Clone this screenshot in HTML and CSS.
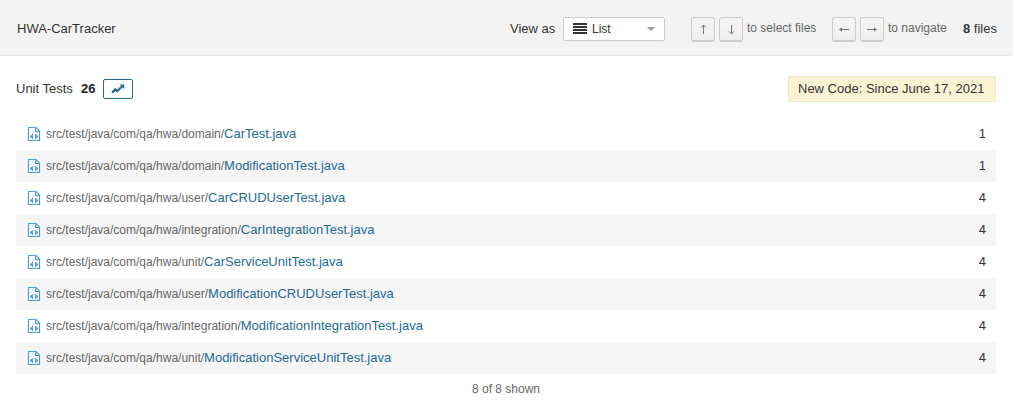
FILE: index.html
```html
<!DOCTYPE html>
<html lang="en">
<head>
<meta charset="utf-8">
<title>HWA-CarTracker</title>
<link rel="stylesheet" href="styles.css">
</head>
<body>
<svg class="defs" aria-hidden="true">
  <symbol id="file" viewBox="0 0 16 16">
    <path fill="none" stroke="currentColor" stroke-width="1.2" d="M2.500 1.500h7.600l3.400 3.400v9.600h-11zM9.500 1.500v4h4"/>
    <path fill="currentColor" d="M7 8v5H6v-1H5.200L3.800 10.500 5.200 9H6V8zM9 8h1v1h.8l1.400 1.500-1.400 1.500H10v1H9z"/>
  </symbol>
  <symbol id="arrow-up" viewBox="0 0 12 12">
    <path fill="none" stroke="currentColor" d="M6.500 2v9M4 4.500 6.500 2 9 4.500"/>
  </symbol>
  <symbol id="arrow-down" viewBox="0 0 12 12">
    <path fill="none" stroke="currentColor" d="M6.500 2v9M4 8.500 6.500 11 9 8.500"/>
  </symbol>
  <symbol id="arrow-left" viewBox="0 0 12 12">
    <path fill="none" stroke="currentColor" d="M2 6.500h9"/>
    <path fill="currentColor" d="M1 6.500 4 4.300v4.400z"/>
  </symbol>
  <symbol id="arrow-right" viewBox="0 0 12 12">
    <path fill="none" stroke="currentColor" d="M1 6.500h9"/>
    <path fill="currentColor" d="M11 6.500 8 4.300v4.400z"/>
  </symbol>
</svg>
<header class="header">
  <span class="project">HWA-CarTracker</span>
  <span class="view-label">View as</span>
  <div class="select">
    <svg class="list-icon" viewBox="0 0 14 11"><path d="M0 0h14v2H0zM0 3h14v2H0zM0 6h14v2H0zM0 9h14v2H0z"/></svg>
    <span>List</span>
    <i class="caret"></i>
  </div>
  <div class="shortcut select-files"><kbd><svg><use href="#arrow-up"/></svg></kbd><kbd><svg><use href="#arrow-down"/></svg></kbd><span>to select files</span></div>
  <div class="shortcut navigate"><kbd><svg><use href="#arrow-left"/></svg></kbd><kbd><svg><use href="#arrow-right"/></svg></kbd><span>to navigate</span></div>
  <span class="count"><b>8</b> files</span>
</header>
<main class="content">
  <div class="measure">
    <span class="metric">Unit Tests</span>
    <b class="total">26</b>
    <span class="history"><svg viewBox="0 0 14 10"><path d="M1 8.800 4.400 5.400 6.200 7.200 11 2.500" fill="none" stroke="currentColor" stroke-width="2.200"/><path d="M8.500.4H13.200v4.700z" fill="currentColor"/></svg></span>
    <span class="period">New Code: Since June 17, 2021</span>
  </div>
  <div class="files">
    <div class="row"><svg><use href="#file"/></svg><span class="path">src/test/java/com/qa/hwa/domain/</span><span class="name">CarTest.java</span><span class="value">1</span></div>
    <div class="row"><svg><use href="#file"/></svg><span class="path">src/test/java/com/qa/hwa/domain/</span><span class="name">ModificationTest.java</span><span class="value">1</span></div>
    <div class="row"><svg><use href="#file"/></svg><span class="path">src/test/java/com/qa/hwa/user/</span><span class="name">CarCRUDUserTest.java</span><span class="value">4</span></div>
    <div class="row"><svg><use href="#file"/></svg><span class="path">src/test/java/com/qa/hwa/integration/</span><span class="name">CarIntegrationTest.java</span><span class="value">4</span></div>
    <div class="row"><svg><use href="#file"/></svg><span class="path">src/test/java/com/qa/hwa/unit/</span><span class="name">CarServiceUnitTest.java</span><span class="value">4</span></div>
    <div class="row"><svg><use href="#file"/></svg><span class="path">src/test/java/com/qa/hwa/user/</span><span class="name">ModificationCRUDUserTest.java</span><span class="value">4</span></div>
    <div class="row"><svg><use href="#file"/></svg><span class="path">src/test/java/com/qa/hwa/integration/</span><span class="name">ModificationIntegrationTest.java</span><span class="value">4</span></div>
    <div class="row"><svg><use href="#file"/></svg><span class="path">src/test/java/com/qa/hwa/unit/</span><span class="name">ModificationServiceUnitTest.java</span><span class="value">4</span></div>
  </div>
  <footer class="shown">8 of 8 shown</footer>
</main>
</body>
</html>
```
FILE: styles.css
```css
* { box-sizing: border-box; }
body {
  margin: 0;
  background: #fff;
  color: #333;
  font: 13px/20px "Liberation Sans", Arial, sans-serif;
  white-space: nowrap;
  overflow: hidden;
}
.defs { display: none; }
.header {
  display: flex;
  align-items: center;
  height: 56px;
  padding: 3px 16px 0 17px;
  background: #f3f3f3;
  border-bottom: 1px solid #e6e6e6;
}
.project { width: 493px; }
.view-label { width: 53px; }
.select {
  display: flex;
  align-items: center;
  width: 102px;
  height: 24px;
  padding: 0 9px;
  border: 1px solid #ccc;
  border-radius: 2px;
  background: #fff;
  font-size: 12px;
}
.list-icon { width: 14px; height: 11px; margin-right: 5px; fill: #333; }
.caret {
  margin-left: auto;
  border: 4px solid transparent;
  border-top-color: #999;
  border-bottom: 0;
}
.shortcut {
  display: flex;
  align-items: center;
  font-size: 12px;
  color: #666;
}
.shortcut kbd {
  display: flex;
  align-items: center;
  justify-content: center;
  width: 24px;
  height: 25px;
  margin-right: 4px;
  border: 1px solid #ccc;
  border-bottom-width: 2px;
  border-radius: 3px;
  background: linear-gradient(#f5f5f5, #eee);
}
.shortcut kbd svg { width: 12px; height: 12px; color: #777; }
.shortcut span { margin-top: -3px; }
.select-files { width: 141px; margin-left: 26px; }
.navigate { width: 131px; }
.select { margin-top: -1px; }
.content { padding: 20px 17px 0 16px; }
.measure { display: flex; align-items: center; height: 26px; }
.metric { width: 65px; }
.total { width: 22px; color: #222; }
.history {
  display: flex;
  align-items: center;
  justify-content: center;
  width: 30px;
  height: 20px;
  border: 1px solid #236a97;
  border-radius: 2px;
  color: #236a97;
}
.history svg { width: 14px; height: 10px; }
.period {
  margin-left: auto;
  width: 208px;
  height: 26px;
  padding-left: 9px;
  border: 1px solid #f1e8c6;
  background: #fbf3d5;
  line-height: 23px;
}
.files { margin-top: 16px; }
.row {
  display: flex;
  align-items: center;
  height: 32px;
  padding: 0 10px;
}
.row:nth-child(even) { background: #f5f5f5; }
.row svg { width: 16px; height: 16px; margin-right: 4px; color: #4b9fd5; }
.path { font-size: 12px; color: #666; }
.name { color: #236a97; }
.value { margin-left: auto; color: #333; }
.shown {
  margin-top: 5px;
  text-align: center;
  font-size: 12px;
  color: #666;
}
```
